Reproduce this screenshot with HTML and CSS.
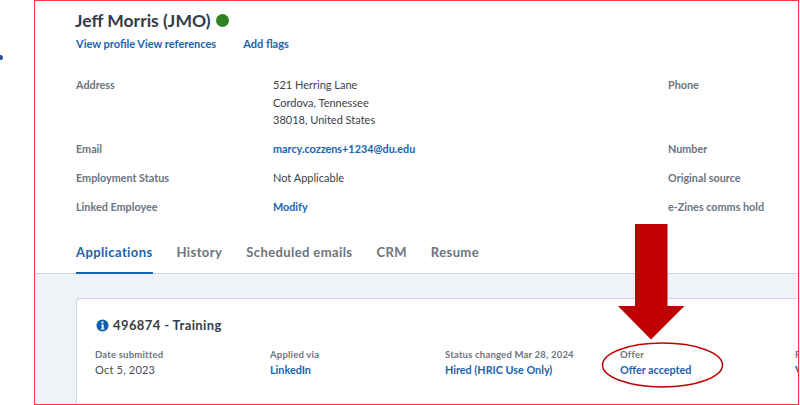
FILE: index.html
```html
<!DOCTYPE html>
<html lang="en">
<head>
<meta charset="utf-8">
<title>Jeff Morris (JMO)</title>
<link rel="stylesheet" href="styles.css">
</head>
<body>
<span class="stray-dot"></span>
<main class="frame">
  <header class="profile">
    <h1 class="name">Jeff Morris (JMO) <span class="status-dot"></span></h1>
    <nav class="profile-links">
      <a class="link">View profile View references</a>
      <a class="link">Add flags</a>
    </nav>
  </header>
  <section class="details">
    <div class="label">Address</div>
    <div class="value">521 Herring Lane<br>Cordova, Tennessee<br>38018, United States</div>
    <div class="label">Phone</div>
    <div class="label">Email</div>
    <a class="link">marcy.cozzens+1234@du.edu</a>
    <div class="label">Number</div>
    <div class="label">Employment Status</div>
    <div class="value">Not Applicable</div>
    <div class="label">Original source</div>
    <div class="label">Linked Employee</div>
    <a class="link">Modify</a>
    <div class="label">e-Zines comms hold</div>
  </section>
  <nav class="tabs">
    <a class="tab tab-active">Applications</a>
    <a class="tab">History</a>
    <a class="tab">Scheduled emails</a>
    <a class="tab">CRM</a>
    <a class="tab">Resume</a>
  </nav>
  <section class="panel">
    <article class="card">
      <h2 class="card-title">
        <svg class="info-icon" viewBox="0 0 14 14" aria-hidden="true"><circle cx="7" cy="7" r="6.5" fill="#0f5fae"/><circle cx="7" cy="3.7" r="1.2" fill="#fff"/><path d="M5.5 5.900h2.700v4.400h.9v1.100H5.200v-1.100h1V7H5.500z" fill="#fff"/></svg>
        496874 - Training
      </h2>
      <div class="facts">
        <div class="fact"><div class="fact-label">Date submitted</div><div class="fact-value">Oct 5, 2023</div></div>
        <div class="fact"><div class="fact-label">Applied via</div><a class="fact-link">LinkedIn</a></div>
        <div class="fact"><div class="fact-label">Status changed Mar 28, 2024</div><a class="fact-link">Hired (HRIC Use Only)</a></div>
        <div class="fact"><div class="fact-label">Offer</div><a class="fact-link">Offer accepted</a></div>
        <div class="fact"><div class="fact-label">R</div><a class="fact-link">V</a></div>
      </div>
    </article>
  </section>
  <svg class="callout" width="800" height="405" viewBox="0 0 800 405" aria-hidden="true">
    <path d="M635 224H667.500V306H684.500L651 339.500L618 306H635Z" fill="#c00000"/>
    <ellipse cx="662.500" cy="365" rx="60" ry="22" fill="none" stroke="#c00000" stroke-width="1.500"/>
  </svg>
</main>
</body>
</html>
```
FILE: styles.css
```css
* { box-sizing: border-box; }
html, body { margin: 0; padding: 0; }
body {
  width: 800px;
  height: 405px;
  overflow: hidden;
  background: #fff;
  font-family: Lato, "Liberation Sans", sans-serif;
  font-size: 11px;
  color: #3a4149;
}
.stray-dot {
  position: absolute;
  left: -2px;
  top: 55px;
  width: 5px;
  height: 5px;
  border-radius: 50%;
  background: #2f5597;
}
.frame {
  position: absolute;
  left: 34px;
  top: 0;
  width: 765px;
  height: 405px;
  border: 1px solid #f53b3b;
  overflow: hidden;
  display: flex;
  flex-direction: column;
}
.profile { padding: 9px 0 0 41px; height: 75px; flex: none; }
.name {
  margin: 0 0 0 -1px;
  height: 21px;
  font-size: 17.500px;
  line-height: 21px;
  font-weight: 700;
  color: #333d47;
  display: flex;
  align-items: center;
  gap: 5px;
}
.status-dot {
  width: 13px;
  height: 13px;
  border-radius: 50%;
  background: #2e8423;
}
.profile-links {
  display: flex;
  gap: 27px;
  margin-top: 5px;
  line-height: 15px;
}
.link {
  color: #1a63ad;
  font-weight: 700;
  font-size: 10.800px;
}
.profile-links .link { font-size: 11px; }
.details {
  display: grid;
  grid-template-columns: 197px 395px 1fr;
  grid-template-rows: 64px 29px 29px 29px;
  padding-left: 41px;
  line-height: 17.500px;
  flex: none;
}
.details > * { align-self: start; }
.label { color: #6b7480; font-weight: 700; font-size: 10.800px; }
.tabs {
  display: flex;
  gap: 24px;
  height: 47px;
  padding: 17px 0 0 41px;
  border-bottom: 1px solid #ccd5de;
  flex: none;
}
.tab {
  font-size: 13px;
  font-weight: 700;
  line-height: 17px;
  color: #6c747d;
  letter-spacing: .4px;
}
.tab-active {
  color: #1a63ad;
  height: 30px;
  border-bottom: 2px solid #1a63ad;
}
.panel {
  flex: 1;
  background: #eff2f6;
  padding: 24px 0 0 41px;
}
.card {
  height: 120px;
  background: #fff;
  border: 1px solid #ccd6e2;
  border-right: 0;
  border-radius: 4px 0 0 0;
  padding: 17px 0 0 18px;
}
.card-title {
  margin: 0;
  font-size: 13px;
  line-height: 18px;
  font-weight: 700;
  color: #333d47;
  display: flex;
  align-items: center;
  gap: 4px;
  letter-spacing: .4px;
}
.info-icon { width: 13px; height: 13px; margin-left: 1px; }
.facts {
  display: grid;
  grid-template-columns: 175px 175px 175px 175px 50px;
  margin-top: 14px;
}
.fact-label { color: #6b7480; font-size: 9.500px; font-weight: 700; line-height: 14px; letter-spacing: .2px; }
.fact-value { color: #454c55; line-height: 16px; letter-spacing: .2px; }
.fact-link { display: block; color: #1a63ad; font-weight: 700; font-size: 10.800px; line-height: 16px; }
.callout {
  position: absolute;
  left: -35px;
  top: -1px;
  pointer-events: none;
}
```
